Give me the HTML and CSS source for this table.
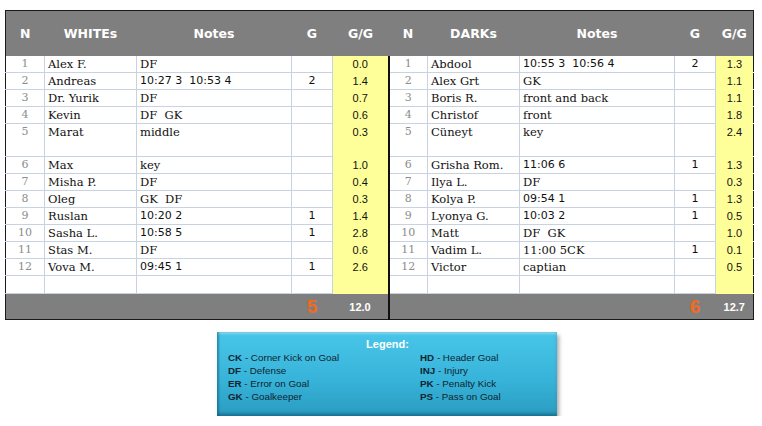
FILE: index.html
```html
<!DOCTYPE html>
<html>
<head>
<meta charset="utf-8">
<link rel="stylesheet" href="styles.css">
</head>
<body>
<div class="page">
<table class="roster">
<colgroup>
<col class="c-n"><col class="c-name"><col class="c-notes"><col class="c-g"><col class="c-gg">
<col class="c-n"><col class="c-name"><col class="c-notes"><col class="c-g"><col class="c-gg2">
</colgroup>
<thead>
<tr class="head">
<th>N</th><th>WHITEs</th><th>Notes</th><th>G</th><th>G/G</th>
<th>N</th><th>DARKs</th><th>Notes</th><th>G</th><th>G/G</th>
</tr>
</thead>
<tbody>
<tr><td class="n">1</td><td class="nm">Alex F.</td><td class="nt">DF</td><td class="g"></td><td class="gg">0.0</td>
<td class="n mid">1</td><td class="nm">Abdool</td><td class="nt t">10:55 3&nbsp;&nbsp;10:56 4</td><td class="g">2</td><td class="gg">1.3</td></tr>
<tr><td class="n">2</td><td class="nm">Andreas</td><td class="nt t">10:27 3&nbsp;&nbsp;10:53 4</td><td class="g">2</td><td class="gg">1.4</td>
<td class="n mid">2</td><td class="nm">Alex Grt</td><td class="nt">GK</td><td class="g"></td><td class="gg">1.1</td></tr>
<tr><td class="n">3</td><td class="nm">Dr. Yurik</td><td class="nt">DF</td><td class="g"></td><td class="gg">0.7</td>
<td class="n mid">3</td><td class="nm">Boris R.</td><td class="nt">front and back</td><td class="g"></td><td class="gg">1.1</td></tr>
<tr><td class="n">4</td><td class="nm">Kevin</td><td class="nt">DF&nbsp;&nbsp;GK</td><td class="g"></td><td class="gg">0.6</td>
<td class="n mid">4</td><td class="nm">Christof</td><td class="nt">front</td><td class="g"></td><td class="gg">1.8</td></tr>
<tr class="tall"><td class="n">5</td><td class="nm">Marat</td><td class="nt">middle</td><td class="g"></td><td class="gg">0.3</td>
<td class="n mid">5</td><td class="nm">Cüneyt</td><td class="nt">key</td><td class="g"></td><td class="gg">2.4</td></tr>
<tr><td class="n">6</td><td class="nm">Max</td><td class="nt">key</td><td class="g"></td><td class="gg">1.0</td>
<td class="n mid">6</td><td class="nm">Grisha Rom.</td><td class="nt t">11:06 6</td><td class="g">1</td><td class="gg">1.3</td></tr>
<tr><td class="n">7</td><td class="nm">Misha P.</td><td class="nt">DF</td><td class="g"></td><td class="gg">0.4</td>
<td class="n mid">7</td><td class="nm">Ilya L.</td><td class="nt">DF</td><td class="g"></td><td class="gg">0.3</td></tr>
<tr><td class="n">8</td><td class="nm">Oleg</td><td class="nt">GK&nbsp;&nbsp;DF</td><td class="g"></td><td class="gg">0.3</td>
<td class="n mid">8</td><td class="nm">Kolya P.</td><td class="nt t">09:54 1</td><td class="g">1</td><td class="gg">1.3</td></tr>
<tr><td class="n">9</td><td class="nm">Ruslan</td><td class="nt t">10:20 2</td><td class="g">1</td><td class="gg">1.4</td>
<td class="n mid">9</td><td class="nm">Lyonya G.</td><td class="nt t">10:03 2</td><td class="g">1</td><td class="gg">0.5</td></tr>
<tr><td class="n">10</td><td class="nm">Sasha L.</td><td class="nt t">10:58 5</td><td class="g">1</td><td class="gg">2.8</td>
<td class="n mid">10</td><td class="nm">Matt</td><td class="nt">DF&nbsp;&nbsp;GK</td><td class="g"></td><td class="gg">1.0</td></tr>
<tr><td class="n">11</td><td class="nm">Stas M.</td><td class="nt">DF</td><td class="g"></td><td class="gg">0.6</td>
<td class="n mid">11</td><td class="nm">Vadim L.</td><td class="nt">11:00 5CK</td><td class="g">1</td><td class="gg">0.1</td></tr>
<tr><td class="n">12</td><td class="nm">Vova M.</td><td class="nt t">09:45 1</td><td class="g">1</td><td class="gg">2.6</td>
<td class="n mid">12</td><td class="nm">Victor</td><td class="nt">captian</td><td class="g"></td><td class="gg">0.5</td></tr>
<tr class="blank"><td class="n"></td><td class="nm"></td><td class="nt"></td><td class="g"></td><td class="gg"></td>
<td class="n mid"></td><td class="nm"></td><td class="nt"></td><td class="g"></td><td class="gg"></td></tr>
</tbody>
<tfoot>
<tr class="foot">
<td colspan="3"></td><td class="total">5</td><td class="sum">12.0</td>
<td colspan="3" class="mid"></td><td class="total">6</td><td class="sum">12.7</td>
</tr>
</tfoot>
</table>

<div class="legend">
<div class="legend-title">Legend:</div>
<div class="legend-grid">
<div><b>CK</b> - Corner Kick on Goal</div>
<div><b>HD</b> - Header Goal</div>
<div><b>DF</b> - Defense</div>
<div><b>INJ</b> - Injury</div>
<div><b>ER</b> - Error on Goal</div>
<div><b>PK</b> - Penalty Kick</div>
<div><b>GK</b> - Goalkeeper</div>
<div><b>PS</b> - Pass on Goal</div>
</div>
</div>
</div>
</body>
</html>
```

FILE: styles.css
```css
html, body {
  margin: 0;
  padding: 0;
  background: #ffffff;
}

.page {
  padding: 10px 0 0 5px;
}

.roster {
  border-collapse: collapse;
  table-layout: fixed;
  width: 748px;
  border: 1px solid #1a1a1a;
}

.c-n { width: 39px; }
.c-name { width: 92px; }
.c-notes { width: 155px; }
.c-g { width: 41px; }
.c-gg { width: 56px; }
.c-gg2 { width: 38px; }

.head th {
  height: 45px;
  padding: 0;
  background: #7f7f7f;
  color: #ffffff;
  font-family: "DejaVu Sans", Verdana, sans-serif;
  font-weight: bold;
  font-size: 12.5px;
  text-align: center;
  vertical-align: middle;
  border: none;
}

tbody td {
  height: 16px;
  padding: 0 3px;
  border: 1px solid #c9d2e0;
  font-family: "DejaVu Serif", serif;
  font-size: 11.5px;
  line-height: 16px;
  color: #111111;
  vertical-align: top;
  white-space: nowrap;
  overflow: hidden;
}

tbody tr:first-child td {
  border-top: none;
}

tbody tr.tall td {
  height: 32px;
}

tbody tr.blank td {
  height: 17px;
}

tbody td.n {
  text-align: center;
  color: #8c8c8c;
  font-size: 11px;
  border-left: none;
}

tbody td.t {
  font-family: "DejaVu Sans", Verdana, sans-serif;
  font-size: 11px;
}

tbody td.g {
  text-align: center;
  font-family: "DejaVu Sans", Verdana, sans-serif;
  font-size: 11px;
}

tbody td.gg {
  background: #ffff99;
  border-color: #ffff99;
  border-right: none;
  text-align: center;
  font-family: "Liberation Sans", Arial, sans-serif;
  font-size: 11px;
}

.roster .mid {
  border-left: 2px solid #111111;
}

.foot td {
  height: 25px;
  padding: 0;
  background: #7f7f7f;
  border-top: none;
  vertical-align: middle;
  text-align: center;
  font-family: "Liberation Sans", Arial, sans-serif;
}

.foot .total {
  color: #f26a1e;
  font-size: 19px;
  font-weight: bold;
}

.foot .sum {
  color: #ffffff;
  font-size: 11px;
  font-weight: bold;
}

.legend {
  margin: 12px 0 0 212px;
  width: 340px;
  height: 84px;
  box-sizing: border-box;
  padding: 6px 10px 0 11px;
  background: linear-gradient(180deg, #48c6e8 0%, #38b4da 55%, #2a9cc0 100%);
  box-shadow: inset 2px 0 2px rgba(0,60,90,0.35), inset 0 -3px 3px rgba(0,60,90,0.35), inset 0 2px 2px rgba(255,255,255,0.35), 2px 3px 4px rgba(0,0,0,0.35);
  font-family: "Liberation Sans", Arial, sans-serif;
}

.legend-title {
  text-align: center;
  color: #ffffff;
  font-weight: bold;
  font-size: 11px;
  line-height: 13px;
  margin-bottom: 0;
}

.legend-grid {
  display: grid;
  grid-template-columns: 192px 1fr;
  font-size: 9.8px;
  line-height: 13px;
  color: #0e2530;
}

.legend-grid b {
  font-weight: bold;
}
```
